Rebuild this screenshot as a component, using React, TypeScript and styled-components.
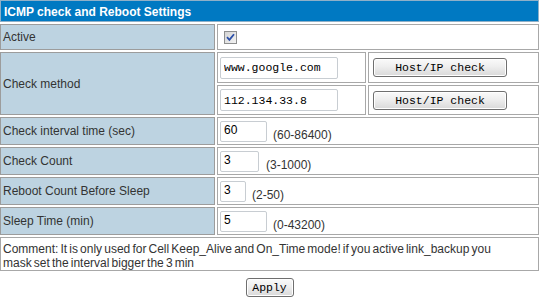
import React from "react";
import styled, { createGlobalStyle } from "styled-components";

const Global = createGlobalStyle`
  html, body { margin: 0; padding: 0; background: #fff; }
  body { font-family: "Liberation Sans", Arial, sans-serif; font-size: 12px; color: #333; }
`;

const Page = styled.div`
  width: 539px;
  display: flex;
  flex-direction: column;
`;

const Table = styled.div`
  display: grid;
  grid-template-columns: 215px 149px 171px;
  grid-template-rows: 22px 26px 31px 30px 28px 28px 28px 28px 34px;
  gap: 2px;
`;

const HeaderCell = styled.div`
  grid-column: 1 / span 3;
  background: #0079c2;
  border: 1px solid #8fb0c8;
  color: #fff;
  font-weight: bold;
  font-size: 12px;
  display: flex;
  align-items: center;
  padding: 1px 0 0 3px;
  box-sizing: border-box;
`;

const LabelCell = styled.div<{ $rows?: number }>`
  grid-row: span ${(p) => p.$rows ?? 1};
  background: #bdd3e1;
  border: 1px solid #9c9c9c;
  box-sizing: border-box;
  display: flex;
  align-items: center;
  padding-left: 2px;
  color: #333;
`;

const ValueCell = styled.div<{ $span?: number; $pad?: number }>`
  grid-column: span ${(p) => p.$span ?? 1};
  background: #fff;
  border: 1px solid #a8a8a8;
  box-sizing: border-box;
  display: flex;
  align-items: center;
  padding-left: ${(p) => p.$pad ?? 2}px;
`;

const TextInput = styled.input<{ $w: number; $mono?: boolean }>`
  width: ${(p) => p.$w}px;
  height: ${(p) => (p.$mono ? 22 : 21)}px;
  box-sizing: border-box;
  margin: 0;
  border: 1px solid #c8cdd2;
  border-radius: 2px;
  padding: ${(p) => (p.$mono ? "0 3px" : "0 3px 3px")};
  font-family: ${(p) => (p.$mono ? `"Liberation Mono", "Courier New", monospace` : `"Liberation Sans", Arial, sans-serif`)};
  font-size: ${(p) => (p.$mono ? "11.5px" : "12px")};
  color: #000;
  background: #fff;
  outline: none;
`;

const Hint = styled.span<{ $gap: number }>`
  margin-left: ${(p) => p.$gap}px;
  padding-top: 8px;
  color: #333;
`;

const MonoButton = styled.button<{ $w: number }>`
  width: ${(p) => p.$w}px;
  height: 19px;
  box-sizing: border-box;
  margin: 0;
  padding: 0;
  border: 1px solid #6f6f6f;
  border-radius: 3px;
  background: linear-gradient(#fafafa 0%, #eeeeee 45%, #d9d9d9 100%);
  box-shadow: inset 0 0 0 1px #fff;
  font-family: "Liberation Mono", "Courier New", monospace;
  font-size: 11.5px;
  color: #000;
  cursor: pointer;
`;

const CheckBox = styled.span`
  width: 13px;
  height: 13px;
  box-sizing: border-box;
  border: 1px solid #8e8f8f;
  background: linear-gradient(135deg, #d4d4d4, #f3f3f3);
  display: inline-flex;
  align-items: center;
  justify-content: center;
`;

const Comment = styled.div`
  grid-column: 1 / span 3;
  border: 1px solid #a8a8a8;
  box-sizing: border-box;
  padding: 4px 2px 0 2px;
  line-height: 14px;
  word-spacing: -1.2px;
  color: #333;
`;

const ApplyRow = styled.div`
  display: flex;
  justify-content: center;
  padding-top: 7px;
`;

const rows = [
  { label: "Check interval time (sec)", value: "60", w: 47, hint: "(60-86400)", gap: 6 },
  { label: "Check Count", value: "3", w: 39, hint: "(3-1000)", gap: 7 },
  { label: "Reboot Count Before Sleep", value: "3", w: 26, hint: "(2-50)", gap: 6 },
  { label: "Sleep Time (min)", value: "5", w: 47, hint: "(0-43200)", gap: 6 },
];

export default function App() {
  return (
    <Page>
      <Global />
      <Table>
        <HeaderCell>ICMP check and Reboot Settings</HeaderCell>

        <LabelCell>Active</LabelCell>
        <ValueCell $span={2} $pad={6}>
          <CheckBox>
            <svg width="9" height="9" viewBox="0 0 9 9">
              <path d="M1 4.2 L3.4 6.8 L8 1.2" fill="none" stroke="#2b4fa8" strokeWidth="1.8" />
            </svg>
          </CheckBox>
        </ValueCell>

        <LabelCell $rows={2}>Check method</LabelCell>
        <ValueCell>
          <TextInput $w={118} $mono defaultValue="www.google.com" />
        </ValueCell>
        <ValueCell $pad={4}>
          <MonoButton $w={134}>Host/IP check</MonoButton>
        </ValueCell>
        <ValueCell>
          <TextInput $w={118} $mono defaultValue="112.134.33.8" />
        </ValueCell>
        <ValueCell $pad={4}>
          <MonoButton $w={134}>Host/IP check</MonoButton>
        </ValueCell>

        {rows.map((r) => (
          <React.Fragment key={r.label}>
            <LabelCell>{r.label}</LabelCell>
            <ValueCell $span={2}>
              <TextInput $w={r.w} defaultValue={r.value} />
              <Hint $gap={r.gap}>{r.hint}</Hint>
            </ValueCell>
          </React.Fragment>
        ))}

        <Comment>
          Comment: It is only used for Cell Keep_Alive and On_Time mode! if you active link_backup you
          <br />
          mask set the interval bigger the 3 min
        </Comment>
      </Table>
      <ApplyRow>
        <MonoButton $w={48}>Apply</MonoButton>
      </ApplyRow>
    </Page>
  );
}
